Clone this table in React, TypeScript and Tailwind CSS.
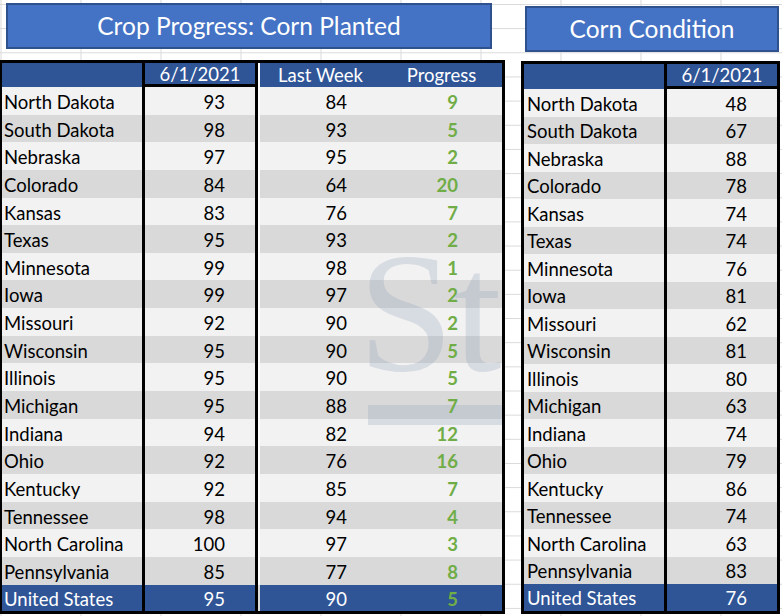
import React from "react";

const leftRows: [string, number, number, number][] = [
  ["North Dakota", 93, 84, 9],
  ["South Dakota", 98, 93, 5],
  ["Nebraska", 97, 95, 2],
  ["Colorado", 84, 64, 20],
  ["Kansas", 83, 76, 7],
  ["Texas", 95, 93, 2],
  ["Minnesota", 99, 98, 1],
  ["Iowa", 99, 97, 2],
  ["Missouri", 92, 90, 2],
  ["Wisconsin", 95, 90, 5],
  ["Illinois", 95, 90, 5],
  ["Michigan", 95, 88, 7],
  ["Indiana", 94, 82, 12],
  ["Ohio", 92, 76, 16],
  ["Kentucky", 92, 85, 7],
  ["Tennessee", 98, 94, 4],
  ["North Carolina", 100, 97, 3],
  ["Pennsylvania", 85, 77, 8],
];

const rightRows: [string, number][] = [
  ["North Dakota", 48],
  ["South Dakota", 67],
  ["Nebraska", 88],
  ["Colorado", 78],
  ["Kansas", 74],
  ["Texas", 74],
  ["Minnesota", 76],
  ["Iowa", 81],
  ["Missouri", 62],
  ["Wisconsin", 81],
  ["Illinois", 80],
  ["Michigan", 63],
  ["Indiana", 74],
  ["Ohio", 79],
  ["Kentucky", 86],
  ["Tennessee", 74],
  ["North Carolina", 63],
  ["Pennsylvania", 83],
];

function LeftTable() {
  return (
    <div className="relative border-t-[3px] border-l-2 border-r-[3px] border-b-[3px] border-black w-[505px]">
      {/* watermark */}
      <div
        aria-hidden="true"
        className="pointer-events-none select-none absolute left-[356px] top-[163px] font-['Liberation_Serif',serif] text-[172px] leading-none text-[rgba(140,155,180,0.26)]"
      >
        St
      </div>
      <div className="pointer-events-none absolute left-[366px] top-[342px] w-[134px] h-[20px] bg-[rgba(140,155,180,0.26)]" />
      {/* header */}
      <div className="flex h-[24px] bg-[#2f5597] text-white">
        <div className="w-[140px]" />
        <div className="w-[116px] border-x-[3px] border-b-[3px] border-black flex items-center justify-center pt-[3px]">
          <span className="relative z-10">6/1/2021</span>
        </div>
        <div className="w-[2px] bg-white" />
        <div className="w-[121px] flex items-center justify-center pt-[2px]">
          <span className="relative z-10">Last Week</span>
        </div>
        <div className="w-[121px] flex items-center justify-center pt-[2px]">
          <span className="relative z-10">Progress</span>
        </div>
      </div>
      {leftRows.map(([name, d, lw, p], i) => (
        <div
          key={name}
          className={`flex h-[27.65px] pt-[4px] text-black ${i % 2 === 0 ? "bg-[#f2f2f2]" : "bg-[#d9d9d9]"}`}
        >
          <div className="w-[140px] pl-[2px] flex items-center">
            <span className="relative z-10">{name}</span>
          </div>
          <div className="w-[116px] -mt-[4px] pt-[4px] border-x-[3px] border-black flex items-center justify-end pr-[30px]">
            <span className="relative z-10">{d}</span>
          </div>
          <div className="w-[2px] -mt-[4px] bg-white" />
          <div className="w-[121px] flex items-center justify-end pr-[34px]">
            <span className="relative z-10">{lw}</span>
          </div>
          <div className="w-[121px] flex items-center justify-end pr-[44px] font-bold text-[#70ad47]">
            <span className="relative z-10">{p}</span>
          </div>
        </div>
      ))}
      <div className="flex h-[26px] pt-[4px] bg-[#2f5597] text-white">
        <div className="w-[140px] pl-[2px] flex items-center">United States</div>
        <div className="w-[116px] -mt-[4px] pt-[4px] border-x-[3px] border-black flex items-center justify-end pr-[30px]">95</div>
        <div className="w-[2px] -mt-[4px] bg-[#dcdcdc]" />
        <div className="w-[121px] flex items-center justify-end pr-[34px]">90</div>
        <div className="w-[121px] flex items-center justify-end pr-[44px] font-bold text-[#70ad47]">5</div>
      </div>
    </div>
  );
}

function RightTable() {
  return (
    <div className="border-[3px] border-black w-[259px]">
      <div className="flex h-[25px] bg-[#2f5597] text-white">
        <div className="w-[140px]" />
        <div className="w-[113px] pt-[2px] border-l-[3px] border-b-[3px] border-black flex items-center justify-center">
          6/1/2021
        </div>
      </div>
      {rightRows.map(([name, v], i) => (
        <div
          key={name}
          className={`flex h-[27.5px] text-black ${i % 2 === 0 ? "bg-[#f2f2f2]" : "bg-[#d9d9d9]"}`}
        >
          <div className="w-[140px] pl-[3px] pt-[4px] flex items-center">{name}</div>
          <div className="w-[113px] pt-[4px] border-l-[3px] border-black flex items-center justify-end pr-[30px]">{v}</div>
        </div>
      ))}
      <div className="flex h-[26.5px] bg-[#2f5597] text-white">
        <div className="w-[140px] pl-[3px] pt-[4px] flex items-center">United States</div>
        <div className="w-[113px] pt-[4px] border-l-[3px] border-black flex items-center justify-end pr-[30px]">76</div>
      </div>
    </div>
  );
}

export default function App() {
  return (
    <div className="w-[782px] h-[616px] overflow-hidden bg-white bg-[linear-gradient(to_right,#d9d9d9_1px,transparent_1px),linear-gradient(to_bottom,#d9d9d9_1px,transparent_1px)] bg-[size:80px_24.17px] bg-[position:0.5px_4px] font-['Lato',sans-serif] text-[18.5px]">
      <div className="flex">
        <div className="w-[505px]">
          <div className="ml-[6px] mt-[3px] w-[486px] h-[46px] bg-[#4472c4] border-2 border-[#2f528f] flex items-center justify-center text-white text-[24.5px]">
            Crop Progress: Corn Planted
          </div>
          <div className="mt-[11px]">
            <LeftTable />
          </div>
        </div>
        <div className="ml-[16px] w-[261px]">
          <div className="ml-[4px] mt-[6px] w-[254px] h-[46px] bg-[#4472c4] border-2 border-[#2f528f] flex items-center justify-center text-white text-[24.5px]">
            Corn Condition
          </div>
          <div className="mt-[9px]">
            <RightTable />
          </div>
        </div>
      </div>
    </div>
  );
}
